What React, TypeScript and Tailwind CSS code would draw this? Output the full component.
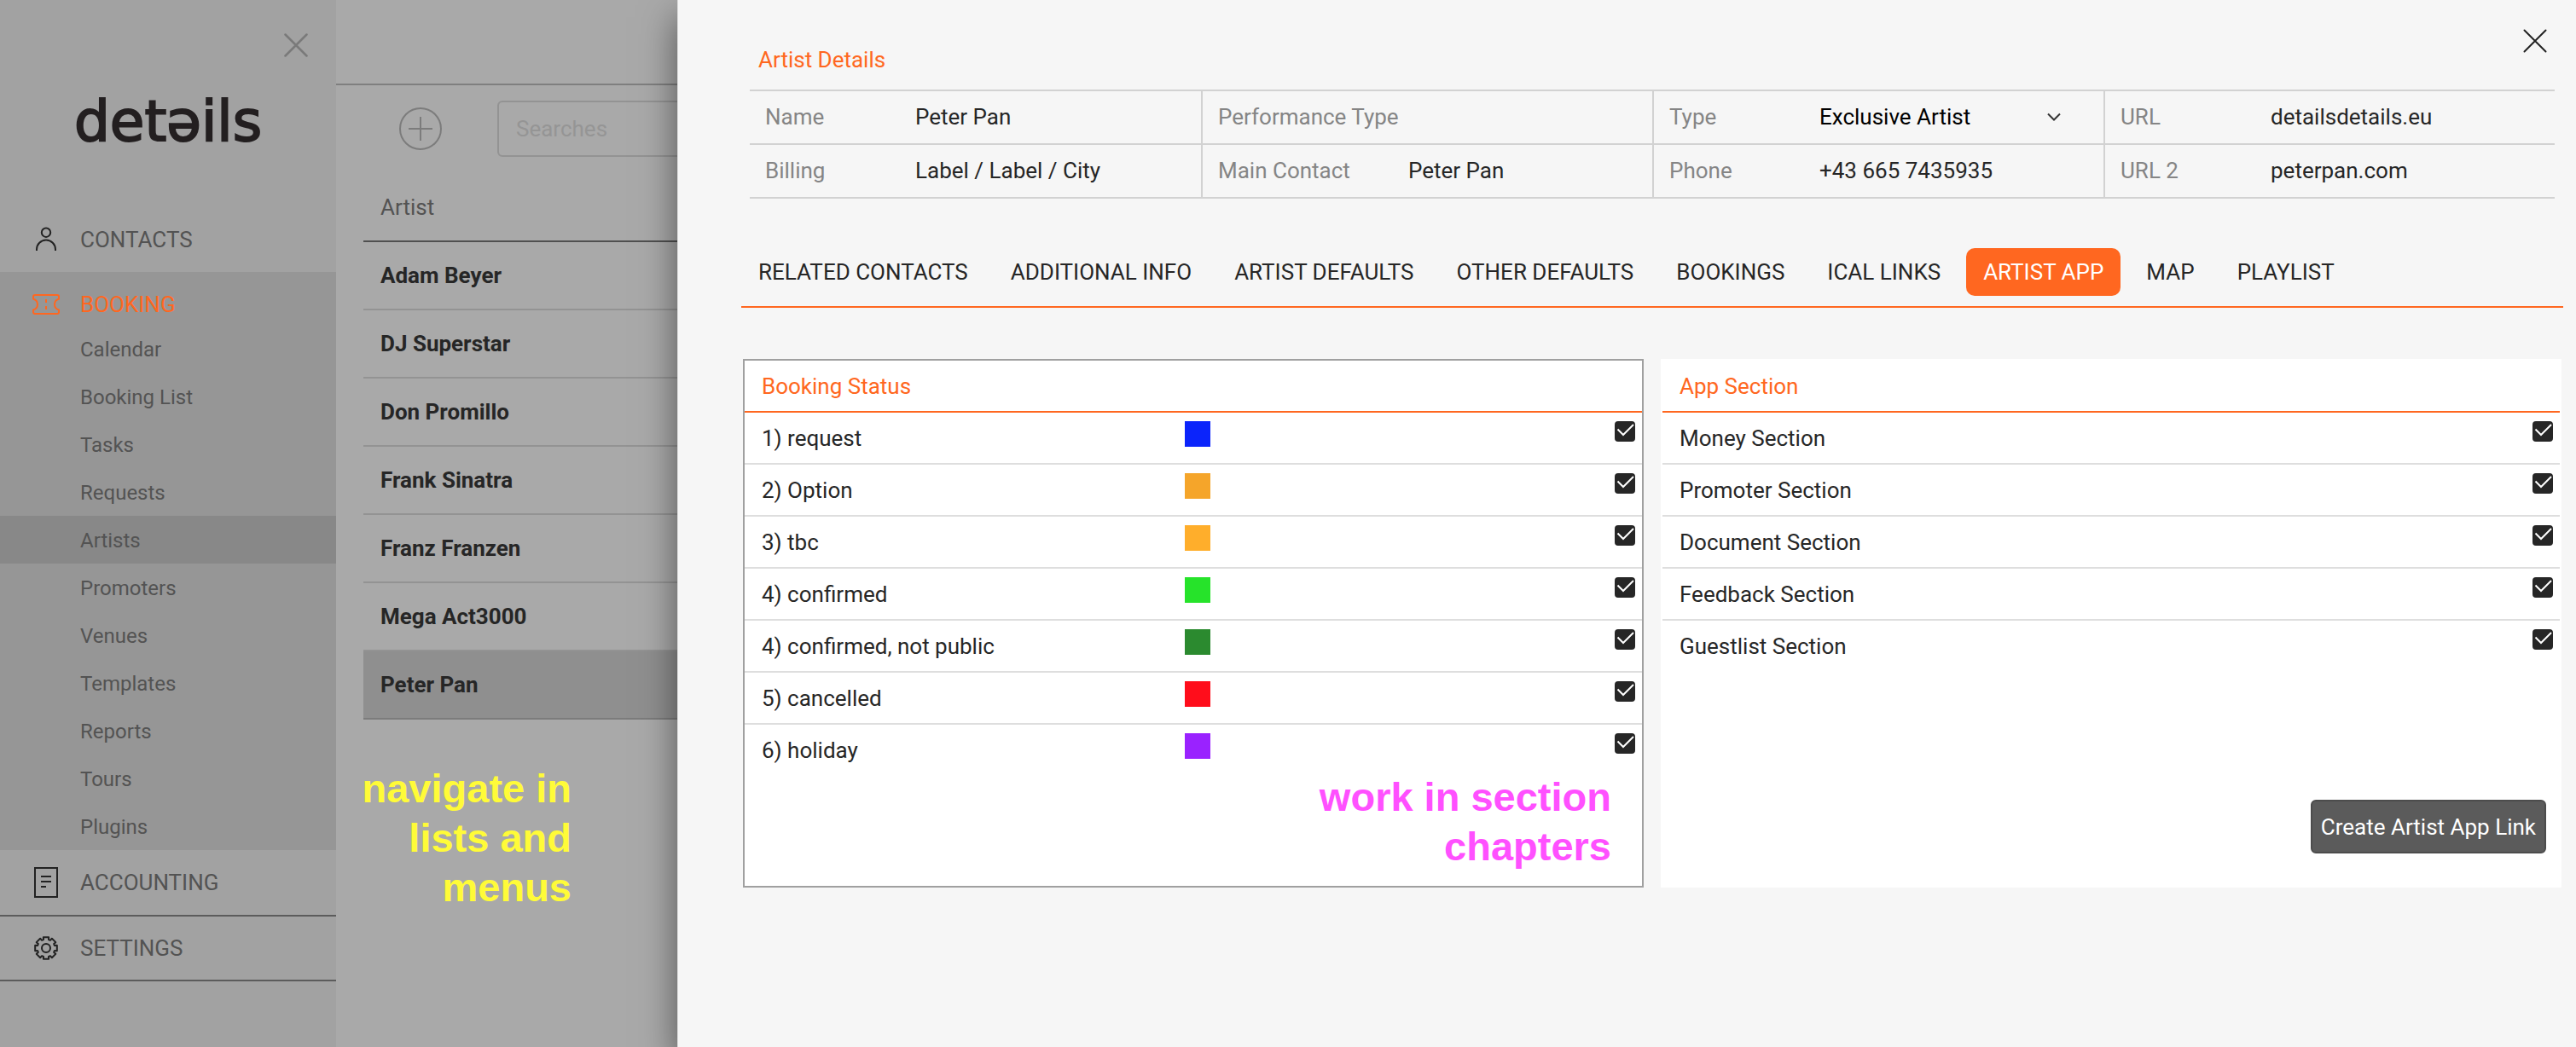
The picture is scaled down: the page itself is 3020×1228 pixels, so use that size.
import React from "react";

const subItems = [
  "Calendar",
  "Booking List",
  "Tasks",
  "Requests",
  "Artists",
  "Promoters",
  "Venues",
  "Templates",
  "Reports",
  "Tours",
  "Plugins",
];

const artists = [
  "Adam Beyer",
  "DJ Superstar",
  "Don Promillo",
  "Frank Sinatra",
  "Franz Franzen",
  "Mega Act3000",
  "Peter Pan",
];

const tabs = [
  "RELATED CONTACTS",
  "ADDITIONAL INFO",
  "ARTIST DEFAULTS",
  "OTHER DEFAULTS",
  "BOOKINGS",
  "ICAL LINKS",
  "ARTIST APP",
  "MAP",
  "PLAYLIST",
];

const statuses = [
  { label: "1) request", color: "bg-[#0b24fb]" },
  { label: "2) Option", color: "bg-[#f5a52a]" },
  { label: "3) tbc", color: "bg-[#ffae2b]" },
  { label: "4) confirmed", color: "bg-[#26e32a]" },
  { label: "4) confirmed, not public", color: "bg-[#2b8a2f]" },
  { label: "5) cancelled", color: "bg-[#ff0d1b]" },
  { label: "6) holiday", color: "bg-[#9a22ff]" },
];

const sections = [
  "Money Section",
  "Promoter Section",
  "Document Section",
  "Feedback Section",
  "Guestlist Section",
];

function CrossIcon({ className }: { className: string }) {
  return (
    <svg viewBox="0 0 28 28" className={className} fill="none" stroke="currentColor" strokeLinecap="round" aria-hidden="true">
      <path d="M1.5 1.5l25 25M26.5 1.5l-25 25" />
    </svg>
  );
}

function PersonIcon() {
  return (
    <svg viewBox="0 0 36 36" className="size-9" fill="none" stroke="currentColor" strokeWidth="2" aria-hidden="true">
      <circle cx="18" cy="9.7" r="5.2" />
      <path d="M7 31v-1.5a11 11 0 0 1 22 0V31" />
    </svg>
  );
}

function TicketIcon() {
  return (
    <svg viewBox="0 0 36 36" className="size-9" fill="none" stroke="currentColor" strokeWidth="2" aria-hidden="true">
      <path d="M5 7h26a2 2 0 0 1 2 2v2.500c-3 1-5 3-5 6.500s2 5.500 5 6.500V27a2 2 0 0 1-2 2H5a2 2 0 0 1-2-2v-2.500c3-1 5-3 5-6.500s-2-5.500-5-6.500V9a2 2 0 0 1 2-2z" />
      <path d="M18 12v4M18 20v4" />
    </svg>
  );
}

function DocumentIcon() {
  return (
    <svg viewBox="0 0 36 36" className="size-9" fill="none" stroke="currentColor" strokeWidth="2" aria-hidden="true">
      <path d="M5 1h26v34H5zM12 11h12M12 17h12M12 23h6" />
    </svg>
  );
}

function gearPath() {
  const pts: string[] = [];
  for (let i = 0; i < 8; i++) {
    const base = (i * Math.PI) / 4;
    const corners: [number, number][] = [
      [-0.29, 10.4],
      [-0.24, 13.2],
      [0.24, 13.2],
      [0.29, 10.4],
    ];
    for (const [a, r] of corners) {
      pts.push(`${(18 + r * Math.sin(base + a)).toFixed(2)} ${(18 - r * Math.cos(base + a)).toFixed(2)}`);
    }
  }
  return `M${pts.join("L")}Z`;
}

function GearIcon() {
  return (
    <svg viewBox="0 0 36 36" className="size-9" fill="none" stroke="currentColor" strokeWidth="2" strokeLinejoin="round" aria-hidden="true">
      <path d={gearPath()} />
      <circle cx="18" cy="18" r="5" />
    </svg>
  );
}

function Check({ id }: { id: string }) {
  return (
    <span className="relative mt-[10px] mr-2 size-6 shrink-0">
      <input
        id={id}
        type="checkbox"
        defaultChecked
        className="peer block size-6 appearance-none rounded border-2 border-[#262626] bg-white checked:bg-[#262626]"
      />
      <svg
        viewBox="0 0 24 24"
        className="pointer-events-none invisible absolute inset-0 size-6 peer-checked:visible"
        fill="none"
        stroke="white"
        strokeWidth="2"
        aria-hidden="true"
      >
        <path d="M3.500 9.500l6.500 6.500L22 4" />
      </svg>
    </span>
  );
}

function Field({ label, wide, children }: { label: string; wide?: boolean; children?: React.ReactNode }) {
  return (
    <div className="flex h-[63px] items-center border-b-2 border-[#d2d2d2]">
      <dt className={wide ? "w-[223px] shrink-0 text-[#858585]" : "w-[176px] shrink-0 text-[#858585]"}>{label}</dt>
      <dd className="min-w-0 flex-1">{children}</dd>
    </div>
  );
}

function Sidebar() {
  return (
    <nav className="w-[394px] shrink-0 bg-[#a2a2a2] text-[#535353]">
      <div className="flex h-[243px] flex-col">
        <button type="button" aria-label="Close menu" className="mt-[29px] mr-[23px] grid size-12 place-items-center self-end text-[#7a7a7a]">
          <CrossIcon className="size-7 stroke-[2.500]" />
        </button>
        <div className="mt-[30px] text-center font-['DejaVu_Sans',sans-serif] text-[66px] leading-[72px] text-[#231f20] [-webkit-text-stroke:2px_#231f20]">
          detəils
        </div>
      </div>
      <a href="#contacts" className="flex h-[76px] items-center gap-[22px] pl-9">
        <span className="text-[#222]"><PersonIcon /></span>
        CONTACTS
      </a>
      <div className="bg-[#969696]">
        <a href="#booking" className="flex h-[62px] items-center gap-[22px] pt-[14px] pl-9 text-[#ff6720]">
          <TicketIcon />
          BOOKING
        </a>
        <ul className="text-[24px]">
          {subItems.map((item) => (
            <li key={item}>
              <a
                href={`#${item}`}
                className={
                  item === "Artists"
                    ? "flex h-14 items-center bg-[#888888] pt-0.5 pl-[94px]"
                    : "flex h-14 items-center pt-0.5 pl-[94px]"
                }
              >
                {item}
              </a>
            </li>
          ))}
        </ul>
      </div>
      <a href="#accounting" className="flex h-[78px] items-center gap-[22px] border-b-2 border-[#5c5c5c] pl-9">
        <span className="text-[#222]"><DocumentIcon /></span>
        ACCOUNTING
      </a>
      <a href="#settings" className="flex h-[76px] items-center gap-[22px] border-b-2 border-[#5c5c5c] pl-9">
        <span className="text-[#222]"><GearIcon /></span>
        SETTINGS
      </a>
    </nav>
  );
}

function ArtistList() {
  return (
    <section className="w-[400px] shrink-0 overflow-hidden bg-[#a9a9a9]">
      <div className="h-[100px] border-b-2 border-[#7f7f7f]" />
      <div className="flex items-center gap-[65px] pt-[18px] pl-[74px]">
        <button type="button" aria-label="Add artist" className="shrink-0 text-[#7c7c7c]">
          <svg viewBox="0 0 50 50" className="size-[50px]" fill="none" stroke="currentColor" strokeWidth="2" aria-hidden="true">
            <circle cx="25" cy="25" r="24" />
            <path d="M11 25h28M25 11v28" />
          </svg>
        </button>
        <input
          type="search"
          aria-label="Searches"
          placeholder="Searches"
          className="h-[66px] w-80 shrink-0 rounded-md border-2 border-[#939393] bg-transparent px-5 placeholder:text-[#959595]"
        />
      </div>
      <table className="mt-[19px] ml-8 w-[500px] border-collapse text-left">
        <thead>
          <tr className="h-20 border-b-2 border-[#505050]">
            <th className="pl-5 font-normal text-[#535353]">Artist</th>
          </tr>
        </thead>
        <tbody>
          {artists.map((name) => (
            <tr
              key={name}
              className={
                name === "Peter Pan"
                  ? "h-20 border-b-2 border-[#7c7c7c] bg-[#8f8f8f]"
                  : "h-20 border-b-2 border-[#939393]"
              }
            >
              <td className="pl-5 font-bold text-[#262626]">{name}</td>
            </tr>
          ))}
        </tbody>
      </table>
      <p className="mt-[52px] w-[276px] text-right font-['Liberation_Sans',sans-serif] text-[47px] leading-[58px] font-bold whitespace-nowrap text-[#fffb38]">
        navigate in
        <br />
        lists and
        <br />
        menus
      </p>
    </section>
  );
}

function Details() {
  return (
    <main className="relative min-w-0 flex-1 border-l border-[#dcdcdc] bg-[#f6f6f6] pr-[15px] pl-[74px] shadow-[0_20px_40px_rgba(0,0,0,0.5)]">
      <header className="flex h-[105px] items-start justify-between">
        <h1 className="mt-[55px] ml-5 text-[#ff6720]">Artist Details</h1>
        <button type="button" aria-label="Close details" className="mt-6 mr-[9px] grid size-12 place-items-center text-[#222]">
          <CrossIcon className="size-7 stroke-2" />
        </button>
      </header>

      <div className="mx-[10px] grid grid-cols-4 border-t-2 border-[#d2d2d2] [&_dd]:pb-0.5 [&_dt]:pb-0.5">
        <dl className="[&>div]:pl-[18px]">
          <Field label="Name">Peter Pan</Field>
          <Field label="Billing">Label / Label / City</Field>
        </dl>
        <dl className="border-l-2 border-[#d2d2d2] [&>div]:pl-[18px]">
          <Field label="Performance Type" wide />
          <Field label="Main Contact" wide>Peter Pan</Field>
        </dl>
        <dl className="border-l-2 border-[#d2d2d2] [&>div]:pl-[18px]">
          <Field label="Type">
            <span className="relative mr-[50px] flex items-center">
              <select aria-label="Type" className="w-full appearance-none bg-transparent text-black" defaultValue="Exclusive Artist">
                <option>Exclusive Artist</option>
              </select>
              <svg viewBox="0 0 16 10" className="pointer-events-none absolute right-0 h-[10px] w-4" fill="none" stroke="#333" strokeWidth="2" aria-hidden="true">
                <path d="M1 1.500l7 7 7-7" />
              </svg>
            </span>
          </Field>
          <Field label="Phone">+43 665 7435935</Field>
        </dl>
        <dl className="border-l-2 border-[#d2d2d2] [&>div]:pl-[18px]">
          <Field label="URL">detailsdetails.eu</Field>
          <Field label="URL 2">peterpan.com</Field>
        </dl>
      </div>

      <div role="tablist" className="mt-[58px] flex gap-[10px] border-b-2 border-[#ff6720] pb-3">
        {tabs.map((tab) => (
          <button
            key={tab}
            type="button"
            role="tab"
            aria-selected={tab === "ARTIST APP"}
            className={
              tab === "ARTIST APP"
                ? "h-14 rounded-[10px] bg-[#ff6720] px-5 whitespace-nowrap text-white"
                : "h-14 rounded-[10px] px-5 whitespace-nowrap"
            }
          >
            {tab}
          </button>
        ))}
      </div>

      <div className="mx-0.5 mt-[60px] grid grid-cols-2 gap-5">
        <section className="relative min-h-[620px] border-2 border-[#a0a0a0] bg-white">
          <h2 className="flex h-[61px] items-center border-b-2 border-[#ff6720] pl-5 text-[#ff6720]">Booking Status</h2>
          <ul>
            {statuses.map((s) => (
              <li key={s.label} className="flex h-[61px] border-b-2 border-[#dedede] last:border-white">
                <label htmlFor={s.label} className="w-[calc(50%-10px)] self-center pl-5">
                  {s.label}
                </label>
                <span className={`mt-[10px] mr-auto size-[30px] ${s.color}`} />
                <Check id={s.label} />
              </li>
            ))}
          </ul>
          <p className="absolute right-9 bottom-[17px] text-right font-['Liberation_Sans',sans-serif] text-[47px] leading-[58px] font-bold text-[#ff50ff]">
            work in section
            <br />
            chapters
          </p>
        </section>

        <section className="flex min-h-[620px] flex-col border-2 border-white bg-white">
          <h2 className="flex h-[61px] items-center border-b-2 border-[#ff6720] pl-5 text-[#ff6720]">App Section</h2>
          <ul>
            {sections.map((s) => (
              <li key={s} className="flex h-[61px] border-b-2 border-[#dedede] last:border-white">
                <label htmlFor={s} className="flex-1 self-center pl-5">
                  {s}
                </label>
                <Check id={s} />
              </li>
            ))}
          </ul>
          <button
            type="button"
            className="mt-auto mr-4 mb-[38px] h-[63px] self-end rounded-md border-2 border-[#4c4c4c] bg-[#5b5b5b] px-[10px] text-white"
          >
            Create Artist App Link
          </button>
        </section>
      </div>
    </main>
  );
}

export default function App() {
  return (
    <div className="flex min-h-screen overflow-hidden bg-[#f6f6f6] font-[Roboto,sans-serif] text-[26px] leading-[30px] text-[#262626]">
      <Sidebar />
      <ArtistList />
      <Details />
    </div>
  );
}
